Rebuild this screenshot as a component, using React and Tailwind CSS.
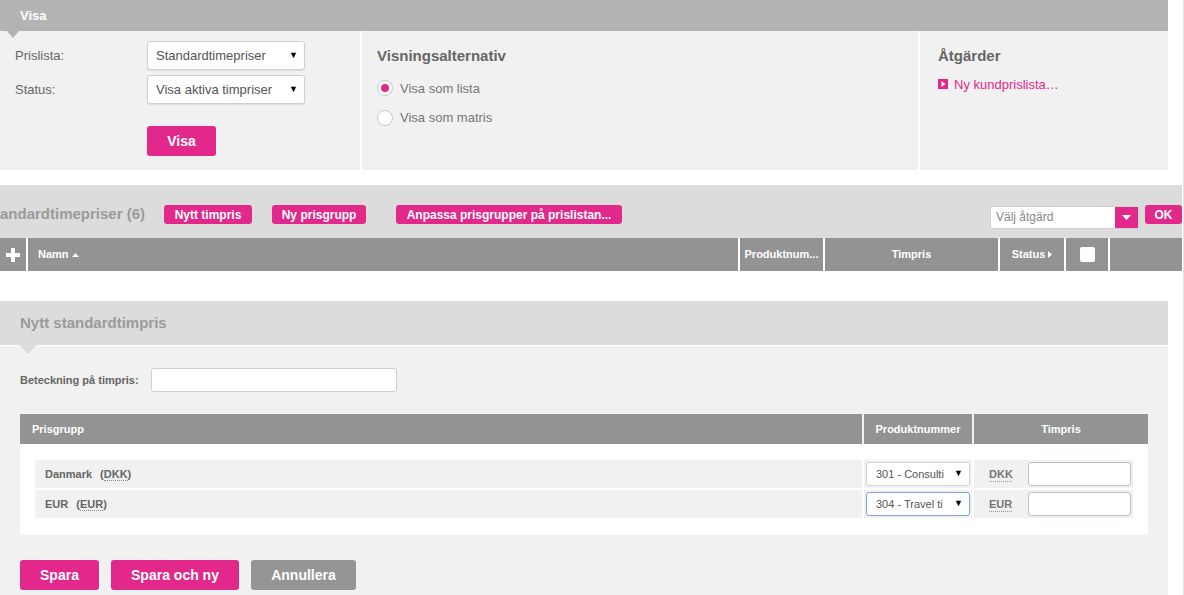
import React from 'react';

const pink = 'bg-[#e3288b]';

function FakeSelect({ label, className = '' }) {
  return (
    <div className={`flex items-center justify-between bg-white border border-[#cfcfcf] rounded-[3px] shadow-[0_1px_1px_rgba(0,0,0,0.08)] pl-[8px] pr-[6px] text-[13px] text-[#555] ${className}`}>
      <span className="truncate">{label}</span>
      <span className="text-[9px] text-black">▼</span>
    </div>
  );
}

function Radio({ checked, label }) {
  return (
    <div className="flex items-center gap-[7px] text-[13px] text-[#777]">
      <span className="w-[16px] h-[16px] rounded-full bg-white border border-[#c8c8c8] flex items-center justify-center">
        {checked && <span className="w-[8px] h-[8px] rounded-full bg-[#e3288b]" />}
      </span>
      {label}
    </div>
  );
}

function PinkBtn({ children, className = '' }) {
  return (
    <button className={`${pink} text-white font-bold rounded-[3px] ${className}`}>{children}</button>
  );
}

export default function App() {
  return (
    <div className="w-[1184px] h-[595px] overflow-hidden bg-white font-['Liberation_Sans',Arial,sans-serif] border-r border-[#e6e6e6]">
      {/* Visa block */}
      <div className="w-[1168px]">
        <div className="relative h-[31px] bg-[#b3b3b3] flex items-center pl-[20px] text-white font-bold text-[13px]">
          Visa
          <svg className="absolute left-[7px] top-[31px]" width="12" height="7" viewBox="0 0 12 7">
            <polygon points="0,0 12,0 6,7" fill="#b3b3b3" />
          </svg>
        </div>
        <div className="flex gap-[2px] h-[139px]">
          <div className="w-[360px] bg-[#f0f1f0] pl-[15px] pt-[10px]">
            <div className="flex items-center h-[29px]">
              <span className="w-[132px] text-[13px] text-[#666]">Prislista:</span>
              <FakeSelect label="Standardtimepriser" className="w-[158px] h-[29px]" />
            </div>
            <div className="flex items-center h-[29px] mt-[5px]">
              <span className="w-[132px] text-[13px] text-[#666]">Status:</span>
              <FakeSelect label="Visa aktiva timpriser" className="w-[158px] h-[29px]" />
            </div>
            <PinkBtn className="ml-[132px] mt-[22px] w-[69px] h-[30px] text-[14px]">Visa</PinkBtn>
          </div>
          <div className="w-[556px] bg-[#f0f1f0] pl-[15px] pt-[14px]">
            <div className="text-[15px] font-bold text-[#666]">Visningsalternativ</div>
            <div className="mt-[11px] flex flex-col gap-[10px]">
              <Radio checked label="Visa som lista" />
              <Radio label="Visa som matris" />
            </div>
          </div>
          <div className="flex-1 bg-[#f0f1f0] pl-[18px] pt-[14px]">
            <div className="text-[15px] font-bold text-[#666]">Åtgärder</div>
            <div className="mt-[7px] flex items-center gap-[6px] text-[13px] text-[#e3288b]">
              <svg width="10" height="10" viewBox="0 0 10 10">
                <rect width="10" height="10" fill="#e3288b" />
                <polygon points="3.5,2 7.5,5 3.5,8" fill="#fff" />
              </svg>
              Ny kundprislista…
            </div>
          </div>
        </div>
      </div>

      {/* list toolbar */}
      <div className="mt-[15px] w-[1182px] h-[53px] bg-[#dcdcdc] flex items-center pt-[6px] overflow-hidden">
        <span className="ml-[-15px] text-[15px] font-bold text-[#9a9a9a] whitespace-nowrap">Standardtimepriser (6)</span>
        <PinkBtn className="ml-[19px] h-[19px] w-[88px] text-[12px]">Nytt timpris</PinkBtn>
        <PinkBtn className="ml-[20px] h-[19px] w-[94px] text-[12px]">Ny prisgrupp</PinkBtn>
        <PinkBtn className="ml-[30px] h-[19px] w-[226px] text-[12px]">Anpassa prisgrupper på prislistan...</PinkBtn>
        <div className="ml-auto mt-[5px] flex items-center h-[23px] border border-[#d0d0d0] rounded-[2px] bg-white">
          <span className="w-[124px] pl-[5px] text-[12px] text-[#888]">Välj åtgärd</span>
          <span className={`${pink} w-[23px] h-full flex items-center justify-center`}>
            <svg width="9" height="5" viewBox="0 0 9 5"><polygon points="0,0 9,0 4.5,5" fill="#fff" /></svg>
          </span>
        </div>
        <PinkBtn className="ml-[6px] w-[37px] h-[19px] text-[12px]">OK</PinkBtn>
      </div>

      {/* list header */}
      <div className="w-[1182px] h-[33px] flex gap-[2px] bg-white text-white font-bold text-[11px]">
        <div className="w-[26px] bg-[#939393] flex items-center justify-center">
          <svg width="14" height="14" viewBox="0 0 14 14"><rect x="5" y="0" width="4" height="14" fill="#fff" /><rect x="0" y="5" width="14" height="4" fill="#fff" /></svg>
        </div>
        <div className="w-[710px] bg-[#939393] flex items-center pl-[10px] gap-[3px]">
          Namn
          <svg width="7" height="4" viewBox="0 0 7 4"><polygon points="0,4 7,4 3.5,0" fill="#fff" /></svg>
        </div>
        <div className="w-[83px] bg-[#939393] flex items-center justify-center whitespace-nowrap">Produktnum...</div>
        <div className="w-[173px] bg-[#939393] flex items-center justify-center">Timpris</div>
        <div className="w-[64px] bg-[#939393] flex items-center justify-center gap-[3px]">
          Status
          <svg width="4" height="7" viewBox="0 0 4 7"><polygon points="0,0 4,3.5 0,7" fill="#fff" /></svg>
        </div>
        <div className="w-[42px] bg-[#939393] flex items-center justify-center">
          <span className="w-[15px] h-[15px] bg-white rounded-[2px]" />
        </div>
        <div className="flex-1 bg-[#939393]" />
      </div>

      {/* new price form */}
      <div className="mt-[30px] w-[1168px]">
        <div className="h-[45px] bg-[#dcdcdc] flex items-center pl-[20px] text-[15px] font-bold text-[#9a9a9a] border-b border-white">
          Nytt standardtimpris
        </div>
        <div className="relative bg-[#f0f1f0] h-[300px] px-[20px] pt-[22px]">
          <svg className="absolute left-[19px] top-[-1px]" width="18" height="11" viewBox="0 0 18 11">
            <polygon points="0,0 18,0 9,10" fill="#dcdcdc" />
            <polyline points="0,0.5 9,10 18,0.5" fill="none" stroke="#fff" strokeWidth="1" />
          </svg>
          <div className="flex items-center">
            <span className="w-[131px] text-[11px] font-bold text-[#666]">Beteckning på timpris:</span>
            <div className="w-[246px] h-[24px] bg-white border border-[#cfcfcf] rounded-[3px]" />
          </div>

          <div className="mt-[22px]">
            <div className="h-[30px] flex gap-[2px] bg-[#f0f1f0] text-white font-bold text-[11px]">
              <div className="w-[842px] bg-[#939393] flex items-center pl-[12px]">Prisgrupp</div>
              <div className="w-[108px] bg-[#939393] flex items-center justify-center">Produktnummer</div>
              <div className="flex-1 bg-[#939393] flex items-center justify-center">Timpris</div>
            </div>
            <div className="bg-white px-[15px] pt-[16px] pb-[17px] flex flex-col gap-[2px]">
              {[
                { name: 'Danmark', cur: 'DKK', prod: '301 - Consulti', focus: false },
                { name: 'EUR', cur: 'EUR', prod: '304 - Travel ti', focus: true },
              ].map((r) => (
                <div key={r.cur} className="h-[28px] flex gap-[2px] text-[11px] text-[#666]">
                  <div className="w-[827px] bg-[#f0f1f0] flex items-center pl-[10px] font-bold">
                    {r.name}
                    <span className="ml-[8px]">(<span className="border-b border-dotted border-[#888]">{r.cur}</span>)</span>
                  </div>
                  <div className="w-[108px] bg-[#f0f1f0] flex items-center pl-[2px]">
                    <div className={`w-[104px] h-[24px] bg-white rounded-[3px] flex items-center justify-between pl-[9px] pr-[6px] text-[11px] text-[#555] ${r.focus ? 'border border-[#7aa6e6]' : 'border border-[#d4d4d4]'}`}>
                      <span className="whitespace-nowrap overflow-hidden w-[68px]">{r.prod}</span>
                      <span className="text-[9px] text-black">▼</span>
                    </div>
                  </div>
                  <div className="flex-1 bg-[#f0f1f0] flex items-center pl-[15px]">
                    <span className="w-[39px] font-bold text-[#777] underline decoration-dotted decoration-[#999] underline-offset-[3px]">{r.cur}</span>
                    <div className="w-[103px] h-[24px] bg-white border border-[#b9c4c4] rounded-[3px]" />
                  </div>
                </div>
              ))}
            </div>
          </div>

          <div className="mt-[25px] flex gap-[12px]">
            <PinkBtn className="w-[79px] h-[30px] text-[14px]">Spara</PinkBtn>
            <PinkBtn className="w-[128px] h-[30px] text-[14px]">Spara och ny</PinkBtn>
            <button className="w-[105px] h-[30px] text-[14px] font-bold text-white bg-[#959595] rounded-[3px]">Annullera</button>
          </div>
        </div>
      </div>
    </div>
  );
}
